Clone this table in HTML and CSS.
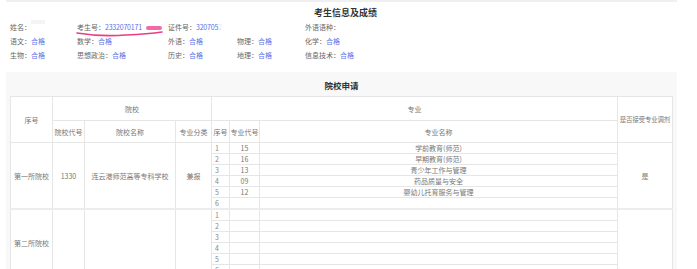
FILE: index.html
```html
<!DOCTYPE html>
<html lang="zh-CN">
<head>
<meta charset="utf-8">
<title>考生信息及成绩</title>
<link rel="stylesheet" href="styles.css">
</head>
<body>
<div class="page">
  <section class="info">
    <h2 class="info-title">考生信息及成绩</h2>
    <div class="grid">
      <div class="cell"><span class="lb">姓名：</span><span class="blur">&nbsp;</span></div>
      <div class="cell"><span class="lb">考生号：</span><span class="val num">2332070171</span></div>
      <div class="cell"><span class="lb">证件号：</span><span class="val num">320705</span><span class="fade">2</span></div>
      <div class="cell"></div>
      <div class="cell"><span class="lb">外语语种：</span></div>

      <div class="cell"><span class="lb">语文：</span><span class="val">合格</span></div>
      <div class="cell"><span class="lb">数学：</span><span class="val">合格</span></div>
      <div class="cell"><span class="lb">外语：</span><span class="val">合格</span></div>
      <div class="cell"><span class="lb">物理：</span><span class="val">合格</span></div>
      <div class="cell"><span class="lb">化学：</span><span class="val">合格</span></div>

      <div class="cell"><span class="lb">生物：</span><span class="val">合格</span></div>
      <div class="cell"><span class="lb">思想政治：</span><span class="val">合格</span></div>
      <div class="cell"><span class="lb">历史：</span><span class="val">合格</span></div>
      <div class="cell"><span class="lb">地理：</span><span class="val">合格</span></div>
      <div class="cell"><span class="lb">信息技术：</span><span class="val">合格</span></div>
    </div>
    <svg class="scribble" width="100" height="16" viewBox="0 0 100 16">
      <rect x="70" y="3" width="16" height="4" rx="2" fill="#f0509a" opacity="0.85"/>
      <path d="M1 10 Q 25 14 50 12 Q 72 11 86 9" fill="none" stroke="#e83f7f" stroke-width="1.6" stroke-linecap="round"/>
    </svg>
  </section>

  <section class="apply">
    <h3 class="apply-title">院校申请</h3>
    <table class="tbl">
      <colgroup>
        <col class="c1"><col class="c2"><col class="c3"><col class="c4">
        <col class="c5"><col class="c6"><col class="c7"><col class="c8">
      </colgroup>
      <thead>
        <tr class="h1">
          <th rowspan="2">序号</th>
          <th colspan="3">院校</th>
          <th colspan="3">专业</th>
          <th rowspan="2" class="adj">是否接受专业调剂</th>
        </tr>
        <tr class="h2">
          <th>院校代号</th>
          <th>院校名称</th>
          <th>专业分类</th>
          <th>序号</th>
          <th>专业代号</th>
          <th>专业名称</th>
        </tr>
      </thead>
      <tbody class="grp">
        <tr><td rowspan="6">第一所院校</td><td rowspan="6">1330</td><td rowspan="6">连云港师范高等专科学校</td><td rowspan="6">兼报</td><td class="no">1</td><td>15</td><td>学前教育(师范)</td><td rowspan="6">是</td></tr>
        <tr><td class="no">2</td><td>16</td><td>早期教育(师范)</td></tr>
        <tr><td class="no">3</td><td>13</td><td>青少年工作与管理</td></tr>
        <tr><td class="no">4</td><td>09</td><td>药品质量与安全</td></tr>
        <tr><td class="no">5</td><td>12</td><td>婴幼儿托育服务与管理</td></tr>
        <tr class="last"><td class="no">6</td><td></td><td></td></tr>
      </tbody>
      <tbody class="grp">
        <tr><td rowspan="6">第二所院校</td><td rowspan="6"></td><td rowspan="6"></td><td rowspan="6"></td><td class="no">1</td><td></td><td></td><td rowspan="6"></td></tr>
        <tr><td class="no">2</td><td></td><td></td></tr>
        <tr><td class="no">3</td><td></td><td></td></tr>
        <tr><td class="no">4</td><td></td><td></td></tr>
        <tr><td class="no">5</td><td></td><td></td></tr>
        <tr class="last"><td class="no">6</td><td></td><td></td></tr>
      </tbody>
    </table>
  </section>
</div>
</body>
</html>
```

FILE: styles.css
```css
* { box-sizing: border-box; }
body {
  margin: 0;
  background: #fff;
  font-family: "Noto Sans CJK SC", "Noto Sans", sans-serif;
  color: #666;
}
.page {
  width: 671px;
  margin-left: 6px;
}
.info {
  position: relative;
  border-top: 2px solid #f0f0f0;
  padding: 5px 0 10px 4px;
}
.info-title {
  margin: 0;
  text-align: center;
  font-size: 9px;
  line-height: 12px;
  font-weight: bold;
  color: #333;
  padding-left: 4px;
}
.grid {
  margin-top: 1px;
  display: grid;
  grid-template-columns: 67px 91px 69px 68px 1fr;
  grid-auto-rows: 14px;
}
.cell {
  font-size: 7px;
  line-height: 14px;
  white-space: nowrap;
}
.lb { color: #666; }
.val { color: #5b72e6; }
.num { letter-spacing: -0.2px; }
.fade { color: #dfe4f7; }
.blur {
  display: inline-block;
  width: 14px;
  height: 4px;
  background: #f4f4f4;
}
.scribble {
  position: absolute;
  left: 70px;
  top: 21px;
}
.apply {
  background: #f8f8f8;
  padding: 0 4px;
}
.apply-title {
  margin: 0;
  height: 24px;
  line-height: 26px;
  text-align: center;
  font-size: 8.5px;
  font-weight: bold;
  color: #333;
}
.tbl {
  width: 662px;
  table-layout: fixed;
  border-collapse: collapse;
  background: #fff;
  font-size: 7px;
  color: #777;
}
.c1 { width: 42px; }
.c2 { width: 32px; }
.c3 { width: 91px; }
.c4 { width: 36px; }
.c5 { width: 18px; }
.c6 { width: 30px; }
.c7 { width: 358px; }
.c8 { width: 55px; }
.tbl th, .tbl td {
  border: 1px solid #e6e6e6;
  padding: 0;
  text-align: center;
  font-weight: normal;
  white-space: nowrap;
  overflow: hidden;
  line-height: 10px;
}
.tbl th.adj { font-size: 6.4px; letter-spacing: -0.1px; }
.h1 th { height: 24px; }
.h2 th { height: 22px; }
.tbl td { height: 11px; }
.tbl td.no { text-align: left; padding-left: 3px; color: #888; }
.grp { border-bottom: 2px solid #ececec; }
```
